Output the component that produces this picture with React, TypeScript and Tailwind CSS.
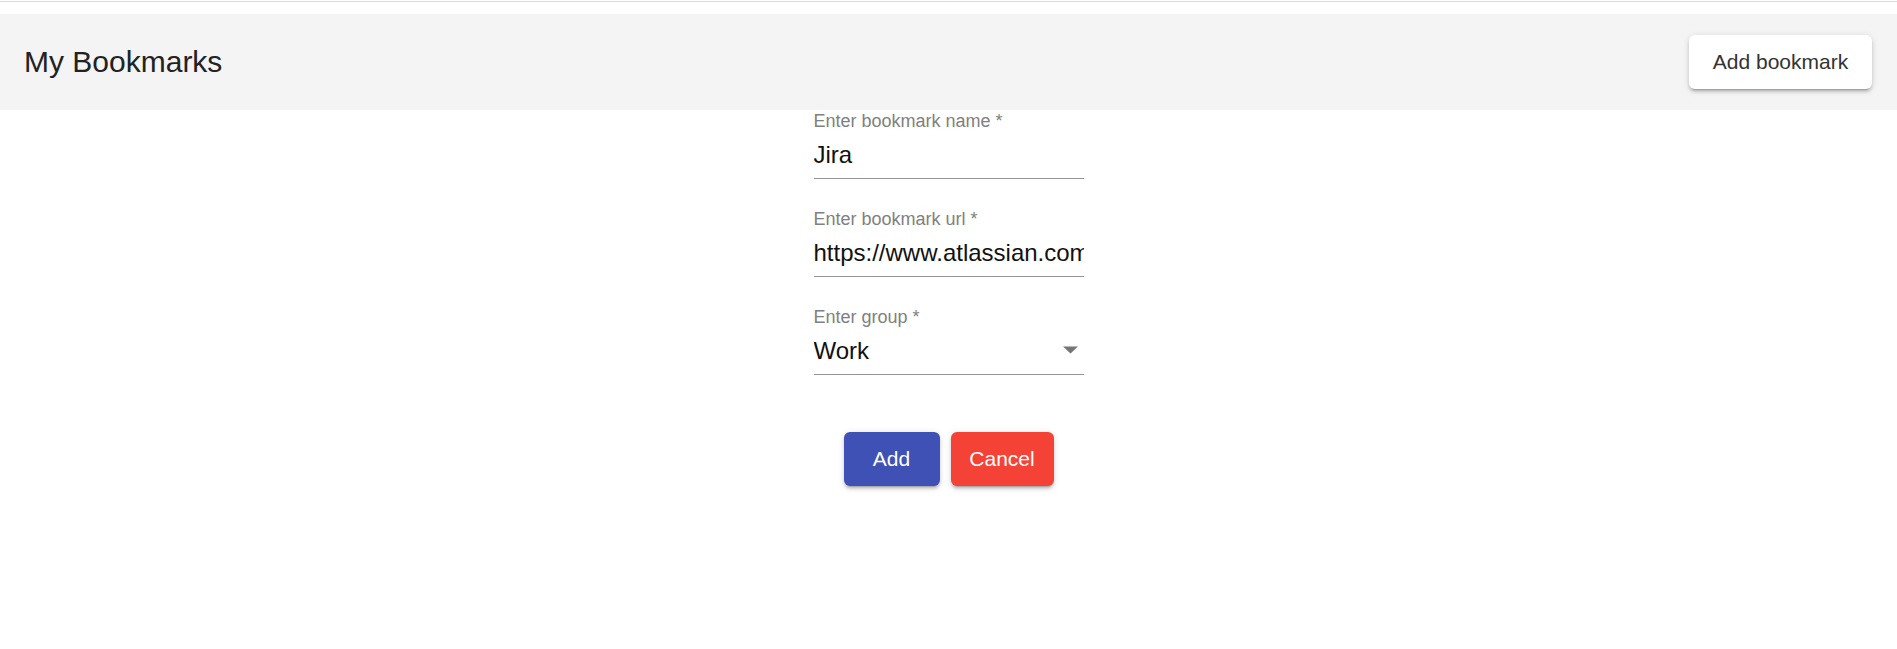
import { useState } from 'react';

const shadow =
  'shadow-[0px_4px_1.5px_-3px_rgba(0,0,0,0.2),0px_3px_3px_0px_rgba(0,0,0,0.14),0px_1.5px_7.5px_0px_rgba(0,0,0,0.12)]';

const Field = ({
  label,
  value,
  select,
}: {
  label: string;
  value: string;
  select?: boolean;
}) => (
  <div className="flex flex-col w-[270px] border-b border-[#949494] pb-[6px]">
    <label className="text-[18px] leading-[18px] text-[#808080]">{label} *</label>
    <div className="flex items-center mt-[8px] h-[34px]">
      <input
        readOnly
        value={value}
        className="flex-1 min-w-0 p-0 bg-transparent outline-none text-[24px] leading-[34px] h-[34px] text-[#111]"
      />
      {select && (
        <svg width="15" height="8" viewBox="0 0 15 8" className="mr-[6px] mb-[3px] shrink-0">
          <path d="M0 0.5 L7.5 7.5 L15 0.5 Z" fill="#757575" />
        </svg>
      )}
    </div>
  </div>
);

export default function App() {
  const [open, setOpen] = useState(true);

  return (
    <div className="min-h-screen bg-white font-['Liberation_Sans',Arial,sans-serif]">
      {/* top rule */}
      <div className="h-[1px] mt-[1px] bg-[#dcdcdc]" />

      <header className="mt-[12px] h-[96px] bg-[#f4f4f4] flex items-center justify-between pl-[24px] pr-[25px]">
        <h1 className="text-[30px] leading-[36px] text-[#222]">My Bookmarks</h1>
        <button
          onClick={() => setOpen(true)}
          className={`w-[183px] h-[54px] rounded-[6px] bg-white text-[21px] text-[#333] ${shadow}`}
        >
          Add bookmark
        </button>
      </header>

      {open && (
        <div className="flex flex-col items-center">
          <div className="flex flex-col gap-[31px] mt-[2px]">
            <Field label="Enter bookmark name" value="Jira" />
            <Field label="Enter bookmark url" value="https://www.atlassian.com/software/jira" />
            <Field label="Enter group" value="Work" select />
          </div>

          <div className="flex gap-[11px] mt-[57px]">
            <button
              className={`w-[96px] h-[54px] rounded-[6px] bg-[#3f51b5] text-white text-[21px] ${shadow}`}
            >
              Add
            </button>
            <button
              onClick={() => setOpen(false)}
              className={`w-[103px] h-[54px] rounded-[6px] bg-[#f44336] text-white text-[21px] ${shadow}`}
            >
              Cancel
            </button>
          </div>
        </div>
      )}
    </div>
  );
}
